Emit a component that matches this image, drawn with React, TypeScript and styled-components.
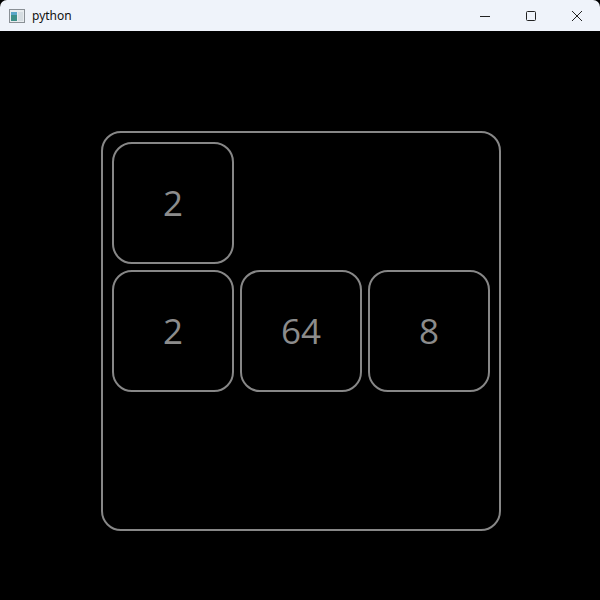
import styled, { createGlobalStyle } from "styled-components";

const Global = createGlobalStyle`
  html, body {
    margin: 0;
    padding: 0;
    background: #000;
  }
  body {
    font-family: "Open Sans", "Noto Sans", sans-serif;
  }
`;

const Window = styled.div`
  width: 600px;
  height: 600px;
  display: flex;
  flex-direction: column;
  background: #000;
`;

const TitleBar = styled.div`
  height: 31px;
  flex: none;
  display: flex;
  align-items: center;
  background: #eff3fa;
  border-top-left-radius: 7px;
  border-top-right-radius: 7px;
  padding-left: 9px;
`;

const AppIcon = styled.svg`
  width: 16px;
  height: 16px;
  margin-right: 7px;
`;

const Title = styled.div`
  font-family: "Noto Sans", "Open Sans", sans-serif;
  font-size: 12px;
  color: #111;
  flex: 1;
`;

const Controls = styled.div`
  display: flex;
  height: 100%;
`;

const ControlButton = styled.div`
  width: 46px;
  height: 100%;
  display: flex;
  align-items: center;
  justify-content: center;
`;

const Stage = styled.div`
  flex: 1;
  display: flex;
  justify-content: center;
  padding-top: 100px;
  padding-left: 2px;
`;

const Board = styled.div`
  width: 378px;
  height: 378px;
  padding: 9px;
  border: 2px solid #878787;
  border-radius: 20px;
  display: grid;
  grid-template-columns: repeat(3, 122px);
  grid-template-rows: repeat(3, 122px);
  gap: 6px;
  box-sizing: content-box;
`;

const Tile = styled.div<{ $row: number; $col: number }>`
  grid-row: ${(p) => p.$row + 1};
  grid-column: ${(p) => p.$col + 1};
  box-sizing: border-box;
  border: 2px solid #878787;
  border-radius: 20px;
  display: flex;
  align-items: center;
  justify-content: center;
  font-family: "Open Sans", "Noto Sans", sans-serif;
  font-size: 35px;
  color: #8c8c8c;
  padding-bottom: 2px;
`;

const tiles = [
  { row: 0, col: 0, value: 2 },
  { row: 1, col: 0, value: 2 },
  { row: 1, col: 1, value: 64 },
  { row: 1, col: 2, value: 8 },
];

export default function App() {
  return (
    <Window>
      <Global />
      <TitleBar>
        <AppIcon viewBox="0 0 16 16">
          <rect x="0.5" y="1.5" width="15" height="13" fill="#e8ecef" stroke="#8a9096" />
          <rect x="2" y="4" width="6" height="9" fill="#3d8f88" />
          <rect x="2" y="4" width="6" height="3" fill="#5aa6c8" />
          <rect x="9" y="4" width="5" height="9" fill="#d6dde2" />
        </AppIcon>
        <Title>python</Title>
        <Controls>
          <ControlButton>
            <svg width="10" height="10" viewBox="0 0 10 10">
              <line x1="0" y1="5.5" x2="10" y2="5.5" stroke="#222" strokeWidth="1" />
            </svg>
          </ControlButton>
          <ControlButton>
            <svg width="10" height="10" viewBox="0 0 10 10">
              <rect x="0.5" y="0.5" width="9" height="9" rx="1" fill="none" stroke="#222" strokeWidth="1" />
            </svg>
          </ControlButton>
          <ControlButton>
            <svg width="10" height="10" viewBox="0 0 10 10">
              <path d="M0 0 L10 10 M10 0 L0 10" stroke="#222" strokeWidth="1" />
            </svg>
          </ControlButton>
        </Controls>
      </TitleBar>
      <Stage>
        <Board>
          {tiles.map((t, i) => (
            <Tile key={i} $row={t.row} $col={t.col}>
              {t.value}
            </Tile>
          ))}
        </Board>
      </Stage>
    </Window>
  );
}
